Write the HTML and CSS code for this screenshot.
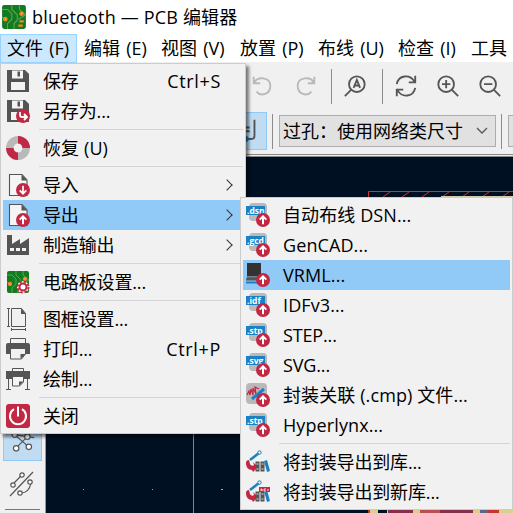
FILE: index.html
```html
<!DOCTYPE html>
<html lang="zh-CN">
<head>
<meta charset="utf-8">
<title>PCB 编辑器</title>
<link rel="stylesheet" href="styles.css">
</head>
<body>
<svg width="0" height="0" class="defs">
  <defs>
    <g id="up"><circle cx="17" cy="17" r="7" fill="#c22743"/><path d="M17 21.300V14M13.700 16.600L17 13.300l3.300 3.300" fill="none" stroke="#fff" stroke-width="2"/></g>
    <g id="down"><circle cx="17" cy="17" r="7" fill="#c22743"/><path d="M17 12.700V20M13.700 17.400l3.300 3.300 3.300-3.300" fill="none" stroke="#fff" stroke-width="1.700"/></g>
    <g id="doc"><path d="M3.500 1.500h12.500l5 5.500v15.500H3.500z" fill="#f5f5f5" stroke="#555" stroke-width="1.100"/><path d="M15.500 1.500l5.500 6h-5.500z" fill="#555"/></g>
    <g id="disk"><path d="M1 1h18l4 4v18H1z" fill="#545454"/><path d="M6 1.500h11v8H6zM5 13h14v8H5z" fill="#f4f4f4"/><path d="M11.500 2.500h2.500v5h-2.500z" fill="#545454"/></g>
    <g id="board"><rect x="1" y="1" width="22" height="22" rx="2" fill="#127b22"/><path d="M1 5h5l4 4v5l-4 4v5M10 1v4l5 5v5l-3 3v5M17 1v4l6 5M1 12l4 3M16 14l7-4" fill="none" stroke="#59a64d" stroke-width="1"/><g fill="#fff" stroke="#ef8a22" stroke-width="1.700"><circle cx="4" cy="14" r="1.300"/><circle cx="19" cy="9" r="1.300"/></g></g>
    <g id="tag"><rect x="3" y="0" width="18" height="18" rx="4" fill="#b9b9b9"/><rect y="3" width="19" height="9" fill="#1a81c4"/></g>
    <g id="lib"><path d="M4 10l9-7" stroke="#1a81c4" stroke-width="2.500"/><circle cx="13.500" cy="2.500" r="1.700" fill="#f0f0f0" stroke="#1a81c4"/><path d="M0 13q0-3 3-3l1 4c1 2 3 2 4 1l-1-3 5 5-5 5-1-2C2 20 0 17 0 13z" fill="#c22743"/><path d="M9.500 11.500h4v10h-4zM14.500 11.500h4v10h-4z" fill="#555"/><path d="M10.500 14h2m-2 5h2m3-5h2m-2 5h2" stroke="#ddd"/><path d="M18 11l3-1 3 11-3 1z" fill="#1a81c4"/></g>
  </defs>
</svg>
<div class="window">
  <header class="title"><svg class="app" viewBox="0 0 24 24"><use href="#board"/><path d="M16 20h4M17 16h4" stroke="#ef8a22" stroke-width="2"/></svg><span class="title-text">bluetooth — PCB 编辑器</span></header>
  <nav class="menubar"><span class="active">文件 (F)</span><span>编辑 (E)</span><span class="w79">视图 (V)</span><span class="w78">放置 (P)</span><span class="w80">布线 (U)</span><span class="w73">检查 (I)</span><span>工具 (T)</span></nav>
  <div class="tools">
    <svg class="t" viewBox="0 0 26 26" stroke="#b9b9b9"><path d="M4 3v7h7M4 10c4-8 18-7 18 3 0 9-10 12-15 6"/></svg>
    <svg class="t redo" viewBox="0 0 26 26" stroke="#b9b9b9"><path d="M22 3v7h-7M22 10C18 2 4 3 4 13c0 9 10 12 15 6"/></svg>
    <i class="div d1"></i>
    <svg class="t find" viewBox="0 0 26 26"><circle cx="15" cy="11" r="8.500"/><path d="M9 17l-7 7"/><path d="M11.500 15L15 6.500l3.500 8.500M13 12.500h4" stroke-width="2"/></svg>
    <i class="div d2"></i>
    <svg class="t refresh" viewBox="0 0 26 26"><path d="M3 11C5 1 17 0 22 8M23 2v7h-7M23 15c-2 10-14 11-19 3M3 24v-7h7"/></svg>
    <svg class="t plus" viewBox="0 0 26 26"><circle cx="11" cy="11" r="8.500"/><path d="M17 17l7 7M6.500 11h9M11 6.500v9"/></svg>
    <svg class="t minus" viewBox="0 0 26 26"><circle cx="11" cy="11" r="8.500"/><path d="M17 17l7 7M6.500 11h9"/></svg>
  </div>
  <div class="options"><div class="toggle"><svg viewBox="0 0 26 38"><path d="M14 7v17q0 3-3 3H6M3 15h6m-6 4h6" fill="none" stroke="#555" stroke-width="2"/><circle cx="5" cy="27" r="3" fill="#1a81c4"/></svg></div><i class="div"></i><div class="combo"><span>过孔：使用网络类尺寸</span><svg viewBox="0 0 12 8"><path d="M1 1l5 5 5-5" fill="none" stroke="#555" stroke-width="1.300"/></svg></div><i class="div last"></i><div class="next"></div></div>
  <main class="work">
    <aside class="side"><div class="net"><svg viewBox="0 0 38 38"><g fill="none" stroke="#555" stroke-width="1.200"><path d="M11 12l13 2 7 1M24 14L12 26M11 12l15 13"/><g fill="#fff"><circle cx="11" cy="12" r="2.800"/><circle cx="24" cy="14" r="2.800"/><circle cx="12.500" cy="26" r="2.800"/><circle cx="25.500" cy="24.500" r="2.800"/></g></g></svg></div>
    <svg class="curve" viewBox="0 0 26 26"><g fill="none" stroke="#555" stroke-width="1.200"><path d="M1 25L24 1M5 12l7-7M12 22c7 0 9-5 10-10"/><g fill="#fff"><circle cx="4" cy="14" r="2.200"/><circle cx="13" cy="4" r="2.200"/><circle cx="21" cy="11" r="2.200"/><circle cx="11" cy="22" r="2.200"/></g></g></svg><i class="hr"></i></aside>
    <svg class="canvas" viewBox="46 157 467 356"><path fill="#001023" d="M46 157h467v356H46z"/><path d="M193.500 157v356" stroke="#80868c"/><path d="M83 489.500h1m68 0h1m68 0h2" stroke="#aaa"/><path d="M368.500 513V191.500H513" fill="none" stroke="#c83434"/><path d="M383 197l7-5m12 5l7-5m13 5l7-5m13 5l7-5m13 5l7-5m13 5l7-5m13 5l7-5" stroke="#c83434"/><path d="M441 196.500h72" stroke="#cdcaa8"/>
      <path d="M370 509h143v4H370z" fill="#d8d08c"/><path d="M353 509h14v4h-14zM378 509h9v4h-9z" fill="#001023"/><path d="M388 509h25v4h-25zM440 509h33v4h-33z" fill="#84304a"/><path d="M420 509h20v4h-20z" fill="#b85050"/><path d="M480 509h8v4h-8z" fill="#596789"/><path d="M488 509h11v4h-11zM368 509h2v4h-2z" fill="#c83434"/></svg>
  </main>
</div>

<section class="menu main-menu">
  <div class="row"><svg viewBox="0 0 24 24"><use href="#disk"/></svg><span>保存</span><kbd>Ctrl+S</kbd></div>
  <div class="row"><svg viewBox="0 0 24 24"><use href="#disk"/><circle cx="17" cy="17" r="7" fill="#c22743"/><path d="M14 13v3q0 2 2 2h5m-3-3l3 3-3 3" fill="none" stroke="#fff" stroke-width="1.800"/></svg><span>另存为...</span></div>
  <hr>
  <div class="row"><svg viewBox="0 0 24 24"><g fill="none" stroke-width="7.500"><circle cx="12" cy="12" r="8.200" stroke="#b9b9b9"/><path d="M12 3.800A8.200 8.200 0 0 1 20.200 12M12 20.200A8.200 8.200 0 0 1 3.800 12" stroke="#c22743"/></g></svg><span class="latin">恢复 (U)</span></div>
  <hr>
  <div class="row"><svg viewBox="0 0 24 24"><use href="#doc"/><use href="#down"/></svg><span>导入</span><b></b></div>
  <div class="row selected"><svg viewBox="0 0 24 24"><use href="#doc"/><use href="#up"/></svg><span>导出</span><b></b></div>
  <div class="row"><svg viewBox="0 0 24 24"><path d="M1 2h5v9l8-5v5l9-6v17H1z" fill="#545454"/><path d="M4 15h4v3H4zm6 0h4v3h-4zm6 0h4v3h-4z" fill="#f4f4f4"/></svg><span>制造输出</span><b></b></div>
  <hr>
  <div class="row"><svg viewBox="0 0 24 24"><use href="#board"/><circle cx="17" cy="17" r="6" fill="#fff"/><circle cx="17" cy="17" r="5.500" fill="none" stroke="#c22743" stroke-width="2" stroke-dasharray="2.500 1.820"/><circle cx="17" cy="17" r="3.500" fill="none" stroke="#c22743" stroke-width="2"/></svg><span>电路板设置...</span></div>
  <hr>
  <div class="row"><svg viewBox="0 0 24 24"><g fill="none" stroke="#555"><path d="M5.500 1.500h10l4 5v13h-14zM1 1.500h3M2.500 1v19M1 19.500h3M5 22.500h15M5.500 21v3m14-3v3"/></g><path d="M15 1l5 6h-5z" fill="#555"/></svg><span>图框设置...</span></div>
  <div class="row"><svg viewBox="0 0 24 24"><path d="M0 8q0-2 2-2h20q2 0 2 2v9h-4v-5H4v5H0z" fill="#545454"/><path d="M4.500 6V1.500h15V6M4.500 12v10h11l4-5v-5" fill="none" stroke="#555"/><path d="M14.500 22v-5h5z" fill="#555"/></svg><span>打印...</span><kbd>Ctrl+P</kbd></div>
  <div class="row"><svg viewBox="0 0 24 24"><path d="M0 4h24v8H0z" fill="#545454"/><path d="M6.500 4V1.500h11V4M2.500 12v10M0 22.500h5M21.500 12v10M19 22.500h5" fill="none" stroke="#555"/><path d="M6.500 9.500h11V15l-4 4h-7z" fill="#f4f4f4" stroke="#555"/><path d="M13 19v-4.500h4.500z" fill="#555"/></svg><span>绘制...</span></div>
  <hr>
  <div class="row"><svg viewBox="0 0 24 24"><rect width="24" height="24" rx="3" fill="#c22743"/><path d="M8 5.200a8 8 0 1 0 8 0M12 2.500v10" fill="none" stroke="#fff" stroke-width="2"/></svg><span>关闭</span></div>
</section>

<section class="menu sub-menu">
  <div class="row"><svg viewBox="0 0 24 24"><use href="#tag"/><text x="1" y="10.500">.dsn</text><use href="#up"/></svg><span class="latin">自动布线 DSN...</span></div>
  <div class="row"><svg viewBox="0 0 24 24"><use href="#tag"/><text x="1" y="10.500">.gcd</text><use href="#up"/></svg><span class="latin">GenCAD...</span></div>
  <div class="row selected"><svg viewBox="0 0 24 24"><path d="M1 0h14v13H1z" fill="#333"/><path d="M1 13.500h14l-1 4H0z" fill="#555"/><path d="M0 19.500h12" stroke="#1a81c4" stroke-width="2"/><path d="M1 14h13" stroke="#777"/><use href="#up"/></svg><span class="latin">VRML...</span></div>
  <div class="row"><svg viewBox="0 0 24 24"><use href="#tag"/><text x="1" y="10.500">.idf</text><use href="#up"/></svg><span class="latin">IDFv3...</span></div>
  <div class="row"><svg viewBox="0 0 24 24"><use href="#tag"/><text x="1" y="10.500">.stp</text><use href="#up"/></svg><span>STEP...</span></div>
  <div class="row"><svg viewBox="0 0 24 24"><use href="#tag"/><text x="1" y="10.500">.svg</text><use href="#up"/></svg><span>SVG...</span></div>
  <div class="row"><svg viewBox="0 0 24 24"><rect width="21" height="21" rx="4" fill="#b9b9b9"/><path d="M1 12l2-4 1 4 1-6 2 6 0-7 3 6-1-7 4 2" fill="none" stroke="#c22743" stroke-width="1.200"/><path d="M6 16l12-10" stroke="#1a81c4" stroke-width="3"/><use href="#up"/></svg><span class="latin">封装关联 (.cmp) 文件...</span></div>
  <div class="row"><svg viewBox="0 0 24 24"><use href="#tag"/><text x="1" y="10.500">.stp</text><use href="#up"/></svg><span class="latin">Hyperlynx...</span></div>
  <hr>
  <div class="row"><svg viewBox="0 0 24 24"><use href="#lib"/></svg><span>将封装导出到库...</span></div>
  <div class="row"><svg viewBox="0 0 24 24"><use href="#lib"/><path d="M13 7h11v5H13z" fill="#c22743"/><path d="M15 11V9h1v2m2-2v2h2m-2-2h2m2 0v2" fill="none" stroke="#fff" stroke-width=".8"/></svg><span>将封装导出到新库...</span></div>
</section>
</body>
</html>
```
FILE: styles.css
```css
* { box-sizing: border-box; }
body { margin: 0; width: 513px; height: 513px; overflow: hidden; background: #f0f0f0; color: #000; font: 18px/30px "Open Sans", "Noto Sans CJK SC", sans-serif; white-space: nowrap; }
svg { flex: none; display: block; }
.defs { position: absolute; }
.window { width: 513px; height: 513px; display: flex; flex-direction: column; overflow: hidden; }
.title { height: 34px; flex: none; background: #fff; display: flex; align-items: center; padding-left: 1px; gap: 5px; letter-spacing: .18px; }
.app { width: 26px; height: 26px; }
.menubar { height: 28px; flex: none; background: #fff; display: flex; line-height: 28px; word-spacing: 1.5px; }
.menubar span { width: 77px; flex: none; padding-left: 7px; }
.menubar .w79 { width: 79px; }
.menubar .w78 { width: 78px; }
.menubar .w80 { width: 80px; }
.menubar .w73 { width: 73px; }
.menubar .active { height: 29px; background: #cce8ff; border: 1px solid #99d1ff; padding-left: 6px; line-height: 26px; z-index: 1; }
.tools { height: 50px; flex: none; display: flex; align-items: center; padding: 0 0 1px 250px; }
.t { width: 24px; height: 24px; margin-bottom: 2px; fill: none; stroke: #555; stroke-width: 2; flex: none; }
.t[stroke] { stroke: #b9b9b9; }
.redo { margin-left: 20px; }
.div { width: 1px; height: 35px; background: #8c8c8c; flex: none; }
.d1 { margin-left: 13px; }
.find { margin-left: 11px; }
.d2 { margin-left: 15px; }
.refresh { margin-left: 11px; }
.plus, .minus { margin-left: 18px; }
.options { height: 42px; flex: none; display: flex; align-items: flex-start; padding-left: 240px; }
.toggle { width: 27px; height: 38px; flex: none; background: #c0dcf3; border: 1px solid #90c8f6; }
.options .div { margin: 2px 6px 0 5px; }
.combo { width: 217px; height: 32px; flex: none; margin-top: 3px; border: 1px solid #adadad; background: #e1e1e1; display: flex; align-items: center; justify-content: space-between; padding: 0 7px 0 3px; }
.combo svg { width: 12px; height: 8px; }
.next { width: 20px; height: 32px; margin-top: 3px; flex: none; border: 1px solid #adadad; background: #e1e1e1; }
.work { flex: 1; display: flex; border-top: 3px double #888; }
.side { width: 46px; flex: none; border-right: 1px solid #999; padding: 265px 3px 0; }
.net { width: 39px; height: 39px; background: #c0dcf3; border: 1px solid #90c8f6; }
.curve { width: 26px; height: 26px; margin: 10px 0 0 6px; }
.hr { display: block; width: 35px; height: 1px; margin: 12px 0 0 2px; background: #777; }
.canvas { width: 467px; height: 356px; }
.menu { position: absolute; border: 1px solid #ccc; background: #f1f1f1; padding: 2px; box-shadow: 3px 3px 3px rgba(0,0,0,.5); }
.main-menu { left: 0; top: 63px; width: 246px; }
.sub-menu { left: 240px; top: 197px; width: 273px; box-shadow: none; }
.row { height: 30px; display: flex; align-items: center; letter-spacing: -.15px; }
.row > svg { width: 24px; height: 24px; margin-left: 3px; margin-right: 13px; letter-spacing: 0; }
.row .latin { letter-spacing: .1px; }
.row kbd { font: inherit; letter-spacing: .65px; margin-left: auto; padding-right: 22px; }
.row b { width: 8px; height: 8px; margin-left: auto; margin-right: 12px; border: solid #333; border-width: 1.5px 1.5px 0 0; transform: rotate(45deg); }
.row text { font: bold 8.5px "Open Sans", sans-serif; fill: #fff; }
.selected { background: #91c9f7; }
.menu hr { border: 0; height: 1px; margin: 3px 0 3px 36px; background: #d5d5d5; }
```
